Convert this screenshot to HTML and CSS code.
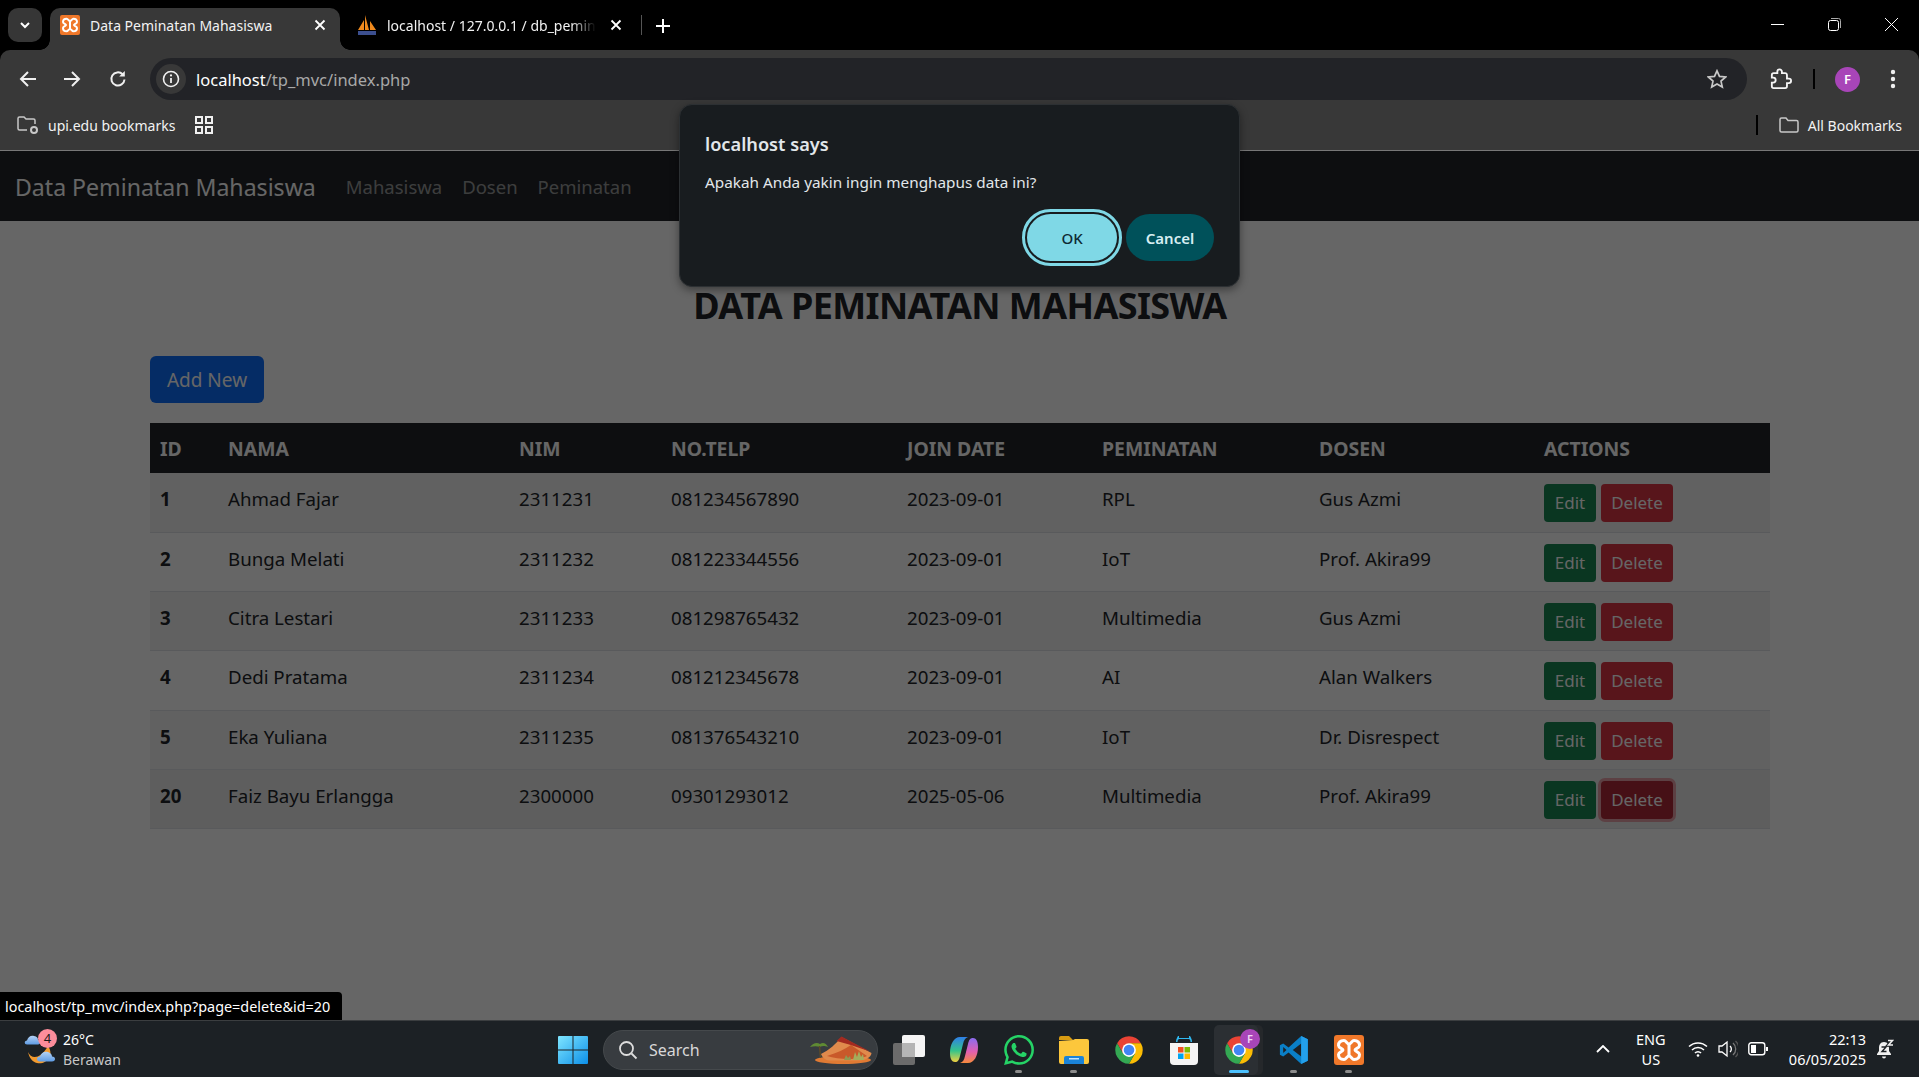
FILE: index.html
```html
<!DOCTYPE html>
<html>
<head>
    <title>Data Peminatan Mahasiswa</title>
    <link rel="stylesheet" href="styles.css">
</head>
<body>
    <svg class="defs" width="0" height="0">
        <defs>
            <linearGradient id="win-grad" x1="0" y1="0" x2="1" y2="1">
                <stop offset="0" stop-color="#7fe6ff"/>
                <stop offset="1" stop-color="#0c8fe8"/>
            </linearGradient>
            <linearGradient id="cop-a" x1="0" y1="0" x2="0" y2="1">
                <stop offset="0" stop-color="#2f7fe8"/>
                <stop offset="0.55" stop-color="#35c48a"/>
                <stop offset="1" stop-color="#f0d040"/>
            </linearGradient>
            <linearGradient id="cop-b" x1="0" y1="0" x2="0" y2="1">
                <stop offset="0" stop-color="#8a6cf0"/>
                <stop offset="0.55" stop-color="#e25fb0"/>
                <stop offset="1" stop-color="#f58a3c"/>
            </linearGradient>
            <linearGradient id="cloud-grad" x1="0" y1="0" x2="0" y2="1">
                <stop offset="0" stop-color="#b4d2f4"/>
                <stop offset="1" stop-color="#5f9ce4"/>
            </linearGradient>
            <symbol id="chrome" viewBox="0 0 48 48">
                <path fill="#ea4335" d="M4.95 13A22 22 0 0 1 43.05 13H24L14.47 29.5Z"/>
                <path fill="#fbbc04" d="M43.05 13A22 22 0 0 1 24 46L33.53 29.5L24 13Z"/>
                <path fill="#34a853" d="M24 46A22 22 0 0 1 4.95 13L14.47 29.5H33.53Z"/>
                <circle cx="24" cy="24" r="11" fill="#fff"/>
                <circle cx="24" cy="24" r="8.5" fill="#4285f4"/>
            </symbol>
            <symbol id="xampp" viewBox="0 0 30 30">
                <rect width="30" height="30" rx="3" fill="#f0782a"/>
                <path fill="none" stroke="#fff" stroke-width="3" d="M10 5.500C12 5.500 13 9 15 9C17 9 18 5.500 20 5.500C24 5.500 25.500 8 25.500 10.500C25.500 13 21 13.500 21 15C21 16.500 25.500 17 25.500 19.500C25.500 22 24 24.500 20 24.500C18 24.500 17 21 15 21C13 21 12 24.500 10 24.500C6 24.500 4.500 22 4.500 19.500C4.500 17 9 16.500 9 15C9 13.500 4.500 13 4.500 10.500C4.500 8 6 5.500 10 5.500Z"/>
                <rect x="13.5" y="9" width="3" height="12" fill="#fff"/>
            </symbol>
        </defs>
    </svg>

    <div class="tabstrip">
        <div class="tab-search">
            <svg width="12" height="12" viewBox="0 0 12 12"><path d="M2 4l4 4 4-4" fill="none" stroke="#fff" stroke-width="2"/></svg>
        </div>
        <div class="tab tab-active">
            <svg class="favicon" width="20" height="20"><use href="#xampp"/></svg>
            <span class="tab-title">Data Peminatan Mahasiswa</span>
            <svg class="tab-close" width="12" height="12" viewBox="0 0 12 12"><path d="M1.5 1.5l9 9M10.5 1.5l-9 9" stroke="#fff" stroke-width="1.8"/></svg>
        </div>
        <div class="tab tab-other">
            <svg class="favicon" width="20" height="22" viewBox="0 0 20 22">
                <path fill="#f08a1d" d="M1 16L7 6V16ZM8 16V1L12 16ZM13 16V7L19 16Z"/>
                <rect x="1" y="17" width="18" height="4" fill="#3c4f8f"/>
            </svg>
            <span class="tab-title tab-fade">localhost / 127.0.0.1 / db_peminatan</span>
            <svg class="tab-close" width="12" height="12" viewBox="0 0 12 12"><path d="M1.5 1.5l9 9M10.5 1.5l-9 9" stroke="#fff" stroke-width="1.8"/></svg>
        </div>
        <div class="tab-sep"></div>
        <svg class="tab-new" width="14" height="14" viewBox="0 0 14 14"><path d="M7 0v14M0 7h14" stroke="#fff" stroke-width="2"/></svg>
        <div class="win-controls">
            <svg width="13" height="13" viewBox="0 0 13 13"><path d="M0 6.500h13" stroke="#fff"/></svg>
            <svg width="13" height="13" viewBox="0 0 13 13"><rect x="0.5" y="2.5" width="10" height="10" rx="2" fill="none" stroke="#fff"/><path d="M3 .5h7.500a2 2 0 0 1 2 2V10" fill="none" stroke="#aaa"/></svg>
            <svg width="13" height="13" viewBox="0 0 13 13"><path d="M0 0l13 13M13 0L0 13" stroke="#fff"/></svg>
        </div>
    </div>

    <div class="toolbar">
        <svg class="nav-icon" width="18" height="18" viewBox="0 0 18 18"><path d="M17 9H2M9 2L2 9l7 7" fill="none" stroke="#f0f0f0" stroke-width="2"/></svg>
        <svg class="nav-icon" width="18" height="18" viewBox="0 0 18 18"><path d="M1 9h15M9 2l7 7-7 7" fill="none" stroke="#f0f0f0" stroke-width="2"/></svg>
        <svg class="nav-icon" width="18" height="18" viewBox="0 0 18 18"><path d="M15.5 9.500A6.600 6.600 0 1 1 13.600 4.300" fill="none" stroke="#f0f0f0" stroke-width="2"/><path d="M15.800 1v5.600h-5.600z" fill="#f0f0f0"/></svg>
        <div class="omnibox">
            <div class="site-info">
                <svg width="18" height="18" viewBox="0 0 18 18"><circle cx="9" cy="9" r="7.5" fill="none" stroke="#f0f0f0" stroke-width="1.6"/><path d="M9 8v5" stroke="#f0f0f0" stroke-width="1.8"/><circle cx="9" cy="5.4" r="1.1" fill="#f0f0f0"/></svg>
            </div>
            <span class="url"><b>localhost</b>/tp_mvc/index.php</span>
            <svg class="star" width="20" height="20" viewBox="0 0 20 20"><path d="M10 1.800l2.500 5.600 6.100.6-4.600 4.100 1.300 6L10 15l-5.300 3.100 1.300-6L1.400 8l6.100-.6z" fill="none" stroke="#c8c8c8" stroke-width="1.7"/></svg>
        </div>
        <svg class="puzzle" width="22" height="22" viewBox="0 0 24 24"><path d="M20.500 11.500H18.500V7.500c0-1.100-.9-2-2-2h-3.500V4a2.500 2.500 0 0 0-5 0v1.500H4c-1.100 0-2 .9-2 2v3h1.500a2.700 2.700 0 0 1 0 5.400H2V20c0 1.100.9 2 2 2h12.500c1.100 0 2-.9 2-2v-3.500h2a2.500 2.500 0 0 0 0-5z" fill="none" stroke="#f4f4f4" stroke-width="2"/></svg>
        <div class="toolbar-sep"></div>
        <div class="avatar">F</div>
        <svg class="menu-dots" width="6" height="20" viewBox="0 0 6 20"><circle cx="3" cy="3" r="2.2" fill="#f0f0f0"/><circle cx="3" cy="10" r="2.2" fill="#f0f0f0"/><circle cx="3" cy="17" r="2.2" fill="#f0f0f0"/></svg>
    </div>

    <div class="bookmarks">
        <svg class="bm-folder" width="22" height="20" viewBox="0 0 22 20"><path d="M10 15H2.500A1.500 1.500 0 0 1 1 13.500V3.500A1.500 1.500 0 0 1 2.500 2H7l2 2h7.500A1.500 1.500 0 0 1 18 5.500V9" fill="none" stroke="#c8c8c8" stroke-width="1.5"/><circle cx="17" cy="15" r="3" fill="none" stroke="#c8c8c8" stroke-width="2"/></svg>
        <span class="bm-text">upi.edu bookmarks</span>
        <svg class="bm-apps" width="18" height="18" viewBox="0 0 18 18"><g fill="none" stroke="#f0f0f0" stroke-width="2"><rect x="1" y="1" width="6" height="6"/><rect x="11" y="1" width="6" height="6"/><rect x="1" y="11" width="6" height="6"/><rect x="11" y="11" width="6" height="6"/></g></svg>
        <div class="bm-sep"></div>
        <svg class="bm-all" width="20" height="16" viewBox="0 0 20 16"><path d="M2.500 1H7l2 2.500h8.500A1.500 1.500 0 0 1 19 5v8.500a1.500 1.500 0 0 1-1.500 1.500h-15A1.500 1.500 0 0 1 1 13.500v-11A1.500 1.500 0 0 1 2.500 1z" fill="none" stroke="#c8c8c8" stroke-width="1.5"/></svg>
        <span class="bm-text">All Bookmarks</span>
    </div>

    <div class="viewport">
        <nav class="navbar">
            <span class="brand">Data Peminatan Mahasiswa</span>
            <a class="nav-link">Mahasiswa</a>
            <a class="nav-link">Dosen</a>
            <a class="nav-link">Peminatan</a>
        </nav>
        <main class="content">
            <h1>DATA PEMINATAN MAHASISWA</h1>
            <a class="btn btn-primary">Add New</a>
            <table class="data-table">
                <colgroup>
                    <col class="c-id"><col class="c-nama"><col class="c-nim"><col class="c-telp">
                    <col class="c-join"><col class="c-minat"><col class="c-dosen"><col class="c-act">
                </colgroup>
                <thead>
                    <tr><th>ID</th><th>NAMA</th><th>NIM</th><th>NO.TELP</th><th>JOIN DATE</th><th>PEMINATAN</th><th>DOSEN</th><th>ACTIONS</th></tr>
                </thead>
                <tbody>
                    <tr><td class="id">1</td><td>Ahmad Fajar</td><td>2311231</td><td>081234567890</td><td>2023-09-01</td><td>RPL</td><td>Gus Azmi</td><td class="actions"><div class="action-row"><a class="btn-sm btn-edit">Edit</a><a class="btn-sm btn-delete">Delete</a></div></td></tr>
                    <tr><td class="id">2</td><td>Bunga Melati</td><td>2311232</td><td>081223344556</td><td>2023-09-01</td><td>IoT</td><td>Prof. Akira99</td><td class="actions"><div class="action-row"><a class="btn-sm btn-edit">Edit</a><a class="btn-sm btn-delete">Delete</a></div></td></tr>
                    <tr><td class="id">3</td><td>Citra Lestari</td><td>2311233</td><td>081298765432</td><td>2023-09-01</td><td>Multimedia</td><td>Gus Azmi</td><td class="actions"><div class="action-row"><a class="btn-sm btn-edit">Edit</a><a class="btn-sm btn-delete">Delete</a></div></td></tr>
                    <tr><td class="id">4</td><td>Dedi Pratama</td><td>2311234</td><td>081212345678</td><td>2023-09-01</td><td>AI</td><td>Alan Walkers</td><td class="actions"><div class="action-row"><a class="btn-sm btn-edit">Edit</a><a class="btn-sm btn-delete">Delete</a></div></td></tr>
                    <tr><td class="id">5</td><td>Eka Yuliana</td><td>2311235</td><td>081376543210</td><td>2023-09-01</td><td>IoT</td><td>Dr. Disrespect</td><td class="actions"><div class="action-row"><a class="btn-sm btn-edit">Edit</a><a class="btn-sm btn-delete">Delete</a></div></td></tr>
                    <tr class="hovered"><td class="id">20</td><td>Faiz Bayu Erlangga</td><td>2300000</td><td>09301293012</td><td>2025-05-06</td><td>Multimedia</td><td>Prof. Akira99</td><td class="actions"><div class="action-row"><a class="btn-sm btn-edit">Edit</a><a class="btn-sm btn-delete is-hover">Delete</a></div></td></tr>
                </tbody>
            </table>
        </main>
        <div class="dim"></div>
        <div class="status-bubble">localhost/tp_mvc/index.php?page=delete&amp;id=20</div>
    </div>

    <div class="dialog">
        <div class="dialog-title">localhost says</div>
        <div class="dialog-msg">Apakah Anda yakin ingin menghapus data ini?</div>
        <div class="dialog-actions">
            <button class="dlg-btn dlg-ok">OK</button>
            <button class="dlg-btn dlg-cancel">Cancel</button>
        </div>
    </div>

    <footer class="taskbar">
        <div class="weather">
            <svg class="weather-icon" width="34" height="36" viewBox="0 0 34 36">
                <path fill="#f29a2e" d="M4 20C7 27 16 28 24 14C31 24 22 33 13 31C8 30 5 25 4 20Z"/>
                <path fill="url(#cloud-grad)" d="M3 12.500C0 12.500 0 8.500 3 8.500C4 5 7 3 10 4C13 4.500 14 6 14 8C17 8 17 12.500 14 12.500Z"/>
                <path fill="url(#cloud-grad)" d="M16 29.500C12 29.500 12 24.500 16 24.500C17 20 21 19 24 20C27 21 28 23 28 24.500C32 24.500 32 29.500 28 29.500Z"/>
            </svg>
            <span class="weather-badge">4</span>
            <div class="weather-text">
                <div class="w-temp">26°C</div>
                <div class="w-desc">Berawan</div>
            </div>
        </div>
        <div class="task-start">
            <svg width="30" height="30" viewBox="0 0 30 30"><path fill="url(#win-grad)" d="M1 1h13.500v13.500H0V2a1 1 0 0 1 1-1zM15.500 1H29a1 1 0 0 1 1 1v12.500H15.500zM0 15.500h14.500V29H1a1 1 0 0 1-1-1zM15.500 15.500H30V28a1 1 0 0 1-1 1H15.500z"/></svg>
        </div>
        <div class="task-search">
            <svg width="20" height="20" viewBox="0 0 20 20"><circle cx="8.5" cy="8.5" r="6.5" fill="none" stroke="#ddd" stroke-width="1.8"/><path d="M13.500 13.500L18.500 18.500" stroke="#ddd" stroke-width="1.8"/></svg>
            <span>Search</span>
            <svg class="search-art" width="63" height="28" viewBox="0 0 63 28">
                <ellipse cx="34" cy="24" rx="28" ry="4" fill="#e07a33"/>
                <path d="M12 18C20 14 27 8 32.500 1L62.500 17C62 21 58 24 50 24.500H20C16 24 13 21 12 18Z" fill="#e08a4c"/>
                <path d="M18 20C28 17 36 13 42 9L58 20C50 24 30 24 18 20Z" fill="#c9592a"/>
                <path d="M27.500 5L32.500 .5L61 15.500L41 8.700Z" fill="#a32a20"/>
                <path d="M1 11C4 7 8 6 11 8C14 6 17 7 19 11C15 9.500 13 10 11 11C8 10 5 10 1 11Z" fill="#5f8a33"/>
                <path d="M10.500 10L11.500 22" stroke="#5b4a28" stroke-width="1.5"/>
                <path d="M44 24L46 16L48 21L50 15L52 21L54 18L55 24Z" fill="#a4ad5c"/>
                <path d="M35 24L37 19L39 22L41 20L42 24Z" fill="#8f9a52"/>
            </svg>
        </div>
        <div class="task-icon">
            <svg width="32" height="30" viewBox="0 0 32 30"><rect x="0" y="8" width="22" height="22" rx="2" fill="#6b6b6b"/><rect x="9" y="0" width="23" height="22" rx="2" fill="#f5f5f5"/><rect x="9" y="8" width="13" height="14" fill="#b5b5b5"/></svg>
        </div>
        <div class="task-icon">
            <svg width="28" height="28" viewBox="0 0 28 28">
                <path fill="url(#cop-a)" d="M10 1H18C15 2 14 4 13 8L10 20C9 24 8 26 5 26C2 26 0 23 0 17C0 8 4 1 10 1Z"/>
                <path fill="url(#cop-b)" d="M18 27H10C13 26 14 24 15 20L18 8C19 4 20 2 23 2C26 2 28 5 28 11C28 20 24 27 18 27Z"/>
            </svg>
        </div>
        <div class="task-icon has-dot">
            <svg width="30" height="30" viewBox="0 0 24 24"><path fill="#25d366" d="M17.472 14.382c-.297-.149-1.758-.867-2.03-.967-.273-.099-.471-.148-.67.15-.197.297-.767.966-.94 1.164-.173.199-.347.223-.644.075-.297-.15-1.255-.463-2.39-1.475-.883-.788-1.48-1.761-1.653-2.059-.173-.297-.018-.458.13-.606.134-.133.298-.347.446-.52.149-.174.198-.298.298-.497.099-.198.05-.371-.025-.52-.075-.149-.669-1.612-.916-2.207-.242-.579-.487-.5-.669-.51-.173-.008-.371-.01-.57-.01-.198 0-.52.074-.792.372-.272.297-1.04 1.016-1.04 2.479 0 1.462 1.065 2.875 1.213 3.074.149.198 2.096 3.2 5.077 4.487.709.306 1.262.489 1.694.625.712.227 1.36.195 1.871.118.571-.085 1.758-.719 2.006-1.413.248-.694.248-1.289.173-1.413-.074-.124-.272-.198-.57-.347m-5.421 7.403h-.004a9.87 9.87 0 01-5.031-1.378l-.361-.214-3.741.982.998-3.648-.235-.374a9.86 9.86 0 01-1.51-5.26c.001-5.45 4.436-9.884 9.888-9.884 2.64 0 5.122 1.03 6.988 2.898a9.825 9.825 0 012.893 6.994c-.003 5.45-4.437 9.884-9.885 9.884m8.413-18.297A11.815 11.815 0 0012.05 0C5.495 0 .16 5.335.157 11.892c0 2.096.547 4.142 1.588 5.945L.057 24l6.305-1.654a11.882 11.882 0 005.683 1.448h.005c6.554 0 11.89-5.335 11.893-11.893a11.821 11.821 0 00-3.48-8.413z"/></svg>
        </div>
        <div class="task-icon has-dot">
            <svg width="30" height="28" viewBox="0 0 30 28"><path fill="#d79b12" d="M0 2a2 2 0 0 1 2-2h8l4 4H0z"/><path fill="#fcc73c" d="M0 5l14-1 2-1h12a2 2 0 0 1 2 2v21a2 2 0 0 1-2 2H2a2 2 0 0 1-2-2z"/><path fill="#1a83d8" d="M5 28v-6a2 2 0 0 1 2-2h16a2 2 0 0 1 2 2v6z"/><rect x="10" y="22" width="10" height="1.5" fill="#bfe3ff"/></svg>
        </div>
        <div class="task-icon">
            <svg width="30" height="30"><use href="#chrome"/></svg>
        </div>
        <div class="task-icon">
            <svg width="30" height="30" viewBox="0 0 30 30"><path fill="#2fb8f0" d="M7 7C7 4 8 3 9 1H10V3H20V1H21C22 3 23 4 23 7H21.500C21.500 5 21 4.500 20 4H10C9 4.500 8.500 5 8.500 7Z"/><path fill="#f4f4f4" d="M1 8h28v18a4 4 0 0 1-4 4H5a4 4 0 0 1-4-4z"/><rect x="9" y="12" width="5.500" height="5.500" fill="#f25022"/><rect x="15.5" y="12" width="5.500" height="5.500" fill="#7fba00"/><rect x="9" y="18.5" width="5.500" height="5.500" fill="#00a4ef"/><rect x="15.5" y="18.5" width="5.500" height="5.500" fill="#ffb900"/></svg>
        </div>
        <div class="task-icon is-active">
            <span class="active-tile"></span>
            <svg class="stacked" width="30" height="30"><use href="#chrome"/></svg>
            <span class="chrome-badge">F</span>
        </div>
        <div class="task-icon has-dot">
            <svg width="30" height="30" viewBox="0 0 100 100"><path fill="#0a7fc7" fill-rule="evenodd" d="M74 3L96 14V86L74 97L32 58L14 72L3 66V34L14 28L32 42ZM74 28L46 50L74 72ZM14 40V60L25 50Z"/><path fill="#23a0ec" d="M74 3L96 14V86L74 97Z"/></svg>
        </div>
        <div class="task-icon has-dot">
            <svg width="30" height="30"><use href="#xampp"/></svg>
        </div>
        <div class="tray">
            <svg class="tray-chev" width="14" height="8" viewBox="0 0 14 8"><path d="M1 7l6-6 6 6" fill="none" stroke="#fff" stroke-width="1.8"/></svg>
            <div class="tray-lang">ENG<br>US</div>
            <svg class="tray-wifi" width="20" height="16" viewBox="0 0 20 16"><g fill="none" stroke="#fff" stroke-width="1.5"><path d="M1 5.500a13 13 0 0 1 18 0"/><path d="M4 9a8.500 8.500 0 0 1 12 0"/><path d="M7 12a4 4 0 0 1 6 0"/></g><circle cx="10" cy="14.5" r="1.3" fill="#fff"/></svg>
            <svg class="tray-vol" width="20" height="18" viewBox="0 0 20 18"><path d="M1 6h3l5-4v14l-5-4H1z" fill="none" stroke="#fff" stroke-width="1.3"/><path d="M12 6a4 4 0 0 1 0 6" fill="none" stroke="#fff" stroke-width="1.3"/><path d="M15 3a8 8 0 0 1 0 12" fill="none" stroke="#777" stroke-width="1.3"/><path d="M17.500 1a11 11 0 0 1 0 16" fill="none" stroke="#555" stroke-width="1.3"/></svg>
            <svg class="tray-batt" width="20" height="14" viewBox="0 0 20 14"><rect x="0.8" y="0.8" width="16" height="12" rx="2.5" fill="none" stroke="#fff" stroke-width="1.4"/><rect x="3" y="3" width="5" height="8" fill="#fff"/><rect x="18" y="5" width="2" height="4" fill="#fff"/></svg>
            <div class="tray-clock">22:13<br>06/05/2025</div>
            <svg class="tray-bell" width="18" height="21" viewBox="0 0 18 21"><path d="M8 3C4.500 3 3 6 3 9V12L1 15V16H15V15L13 12V9C13 6 11.500 3 8 3Z" fill="#f0f0f0"/><path d="M6 17.500H10A2 2 0 0 1 6 17.500Z" fill="#f0f0f0"/><path d="M5.500 8H10L6 12.500H10.500" fill="none" stroke="#1c2125" stroke-width="1.4"/><path d="M11.500 1.500H16.500L12.500 6H17" fill="none" stroke="#1c2125" stroke-width="3.5"/><path d="M12 1.500H16.500L12.500 6H17" fill="none" stroke="#f0f0f0" stroke-width="1.5"/></svg>
        </div>
    </footer>
</body>
</html>
```

FILE: styles.css
```css
* {
    box-sizing: border-box;
}

html, body {
    margin: 0;
    height: 1077px;
    overflow: hidden;
}

body {
    display: flex;
    flex-direction: column;
    position: relative;
    background: #000;
    font-family: "Noto Sans", "Open Sans", sans-serif;
    color: #fff;
}

.defs {
    position: absolute;
}

/* browser: tab strip */
.tabstrip {
    display: flex;
    align-items: flex-start;
    height: 50px;
    padding: 8px 0 0 8px;
    background: #000;
    flex: none;
}

.tab-search {
    display: flex;
    align-items: center;
    justify-content: center;
    width: 34px;
    height: 34px;
    border-radius: 10px;
    background: #363636;
}

.tab {
    display: flex;
    align-items: center;
    height: 42px;
    padding-bottom: 8px;
    font-size: 15px;
}

.tab-active {
    position: relative;
    width: 290px;
    margin-left: 8px;
    padding-left: 10px;
    background: #383838;
    border-radius: 10px 10px 0 0;
}

.tab-active::before,
.tab-active::after {
    content: "";
    position: absolute;
    bottom: 0;
    width: 10px;
    height: 10px;
    background: radial-gradient(circle at 0 0, #000 9.5px, #383838 10px);
}

.tab-active::before {
    left: -10px;
}

.tab-active::after {
    right: -10px;
    background: radial-gradient(circle at 100% 0, #000 9.5px, #383838 10px);
}

.tab-other {
    width: 288px;
    margin-left: 5px;
    padding-left: 12px;
}

.favicon {
    flex: none;
    margin-right: 10px;
}

.tab-title {
    display: block;
    width: 209px;
    white-space: nowrap;
    overflow: hidden;
    font-size: 14px;
    color: #f2f2f2;
}

.tab-active .tab-title {
    width: 224px;
}

.tab-fade {
    -webkit-mask-image: linear-gradient(to right, #000 88%, transparent);
    mask-image: linear-gradient(to right, #000 88%, transparent);
}

.tab-close {
    flex: none;
}

.tab-other .tab-close {
    margin-left: 14px;
}

.tab-sep {
    width: 1px;
    height: 20px;
    margin: 7px 0 0 8px;
    background: #555;
}

.tab-new {
    margin: 11px 0 0 14px;
}

.win-controls {
    display: flex;
    gap: 44px;
    margin: 10px 21px 0 auto;
}

/* browser: toolbar */
.toolbar {
    display: flex;
    align-items: center;
    flex: none;
    height: 58px;
    padding-left: 19px;
    background: #383838;
    border-radius: 10px 10px 0 0;
}

.nav-icon {
    margin-right: 26px;
}

.nav-icon:nth-child(2) {
    margin-right: 28px;
}

.nav-icon:nth-child(3) {
    margin-right: 23px;
}

.omnibox {
    display: flex;
    align-items: center;
    width: 1597px;
    height: 42px;
    padding: 0 20px 0 6px;
    border-radius: 21px;
    background: #222327;
}

.site-info {
    display: flex;
    align-items: center;
    justify-content: center;
    width: 30px;
    height: 30px;
    border-radius: 50%;
    background: #383838;
}

.url {
    margin-left: 10px;
    font-size: 16.5px;
    color: #a8a8a8;
}

.url b {
    font-weight: 400;
    color: #fff;
}

.star {
    margin-left: auto;
}

.puzzle {
    margin-left: 23px;
}

.toolbar-sep {
    width: 2px;
    height: 20px;
    margin-left: 21px;
    background: #000;
}

.avatar {
    display: flex;
    align-items: center;
    justify-content: center;
    width: 25px;
    height: 25px;
    margin-left: 20px;
    border-radius: 50%;
    background: #a845b8;
    font-size: 13px;
    font-weight: 600;
}

.menu-dots {
    margin-left: 30px;
}

/* browser: bookmarks */
.bookmarks {
    display: flex;
    align-items: center;
    flex: none;
    height: 43px;
    padding: 0 17px 8px 17px;
    background: #383838;
    border-bottom: 1px solid #777;
}

.bm-text {
    font-size: 14px;
    color: #f2f2f2;
    margin-left: 9px;
}

.bm-apps {
    margin-left: 20px;
}

.bm-sep {
    width: 2px;
    height: 20px;
    margin-left: auto;
    background: #000;
}

.bm-all {
    margin-left: 21px;
}

/* page */
.viewport {
    position: relative;
    flex: 1;
    background: #fff;
    color: #212529;
}

.navbar {
    display: flex;
    align-items: center;
    height: 70px;
    padding: 2px 0 0 15px;
    background: #212529;
}

.brand {
    margin-right: 30px;
    font-size: 23.1px;
    color: #fff;
}

.nav-link {
    margin: 0 20px 2px 0;
    font-size: 18.5px;
    color: rgba(255, 255, 255, .55);
}

.content {
    display: flex;
    flex-direction: column;
    align-items: flex-start;
    padding: 61px 149px 0 150px;
}

h1 {
    align-self: center;
    margin: 0 0 26px;
    font-size: 36px;
    font-weight: 700;
    line-height: 48px;
    letter-spacing: -.6px;
}

.btn {
    display: flex;
    align-items: center;
    justify-content: center;
    width: 114px;
    height: 47px;
    margin-bottom: 20px;
    border-radius: 6px;
    font-size: 19px;
}

.btn-primary {
    background: #0d6efd;
    color: #fff;
}

.data-table {
    width: 1620px;
    border-collapse: collapse;
    table-layout: fixed;
    font-size: 18.7px;
}

.c-id { width: 70px; }
.c-nama { width: 291px; }
.c-nim { width: 152px; }
.c-telp { width: 236px; }
.c-join { width: 195px; }
.c-minat { width: 217px; }
.c-dosen { width: 225px; }
.c-act { width: 234px; }

.data-table th {
    height: 50px;
    padding: 1px 8px 0;
    background: #212529;
    color: #fff;
    font-size: 19.4px;
    text-align: left;
    font-weight: 700;
}

.data-table th:first-child,
.data-table td.id {
    padding-left: 10px;
}

.data-table td {
    height: 59.3px;
    padding: 11px 8px 0;
    vertical-align: top;
    line-height: 30px;
    border-bottom: 1px solid #dee2e6;
}

.data-table tbody tr:nth-child(odd) td {
    background: rgba(0, 0, 0, .05);
}

.data-table tbody tr.hovered td {
    background: rgba(0, 0, 0, .075);
}

.data-table td.id {
    font-weight: 700;
}

.action-row {
    display: flex;
    gap: 5px;
}

.btn-sm {
    display: flex;
    align-items: center;
    justify-content: center;
    height: 38px;
    border-radius: 4px;
    font-size: 17px;
    color: #fff;
}

.btn-edit {
    width: 52px;
    background: #198754;
}

.btn-delete {
    width: 72px;
    background: #dc3545;
}

.btn-delete.is-hover {
    background: #b02a37;
    box-shadow: 0 0 0 3px rgba(225, 83, 97, .5);
}

/* dimmed backdrop of the native confirm */
.dim {
    position: absolute;
    inset: 0;
    background: rgba(0, 0, 0, .6);
}

.status-bubble {
    position: absolute;
    left: 0;
    bottom: 0;
    width: 342px;
    height: 28px;
    padding-left: 5px;
    background: #000;
    border-radius: 0 4px 0 0;
    color: #fff;
    font-size: 14.4px;
    line-height: 29px;
    white-space: nowrap;
}

/* native confirm dialog */
.dialog {
    position: absolute;
    top: 104px;
    left: 679px;
    width: 561px;
    height: 183px;
    padding: 26px 25px 0;
    border-radius: 13px;
    background: #181c1f;
    border: 1px solid #2c3033;
    box-shadow: 0 3px 8px rgba(0, 0, 0, .4);
    color: #e2e7ea;
}

.dialog-title {
    font-size: 18.2px;
    font-weight: 600;
    line-height: 26px;
}

.dialog-msg {
    margin-top: 13px;
    font-size: 15.3px;
    line-height: 24px;
}

.dialog-actions {
    display: flex;
    justify-content: flex-end;
    gap: 9px;
    margin-top: 20px;
}

.dlg-btn {
    height: 47px;
    border: none;
    border-radius: 24px;
    font-family: inherit;
    font-size: 15px;
    font-weight: 500;
}

.dlg-ok {
    width: 90px;
    background: #7fd8e6;
    color: #0e2a33;
    outline: 3px solid #7fd8e6;
    outline-offset: 2px;
}

.dlg-cancel {
    width: 88px;
    background: #00515a;
    color: #d6eef2;
    font-weight: 600;
}

/* windows taskbar */
.taskbar {
    display: flex;
    align-items: center;
    flex: none;
    height: 57px;
    padding-top: 2px;
    background: #1c2125;
    border-top: 1px solid #3b3e40;
}

.weather {
    position: relative;
    display: flex;
    align-items: center;
    width: 545px;
    padding-left: 24px;
}

.weather-icon {
    flex: none;
}

.weather-badge {
    position: absolute;
    left: 38px;
    top: -1px;
    width: 19px;
    height: 19px;
    border-radius: 50%;
    background: #fc8d9b;
    color: #1a1a1a;
    font-size: 13px;
    line-height: 19px;
    text-align: center;
}

.weather-text {
    margin-left: 5px;
    font-size: 14px;
    line-height: 20px;
}

.w-desc {
    color: #c6c6c6;
}

.task-start {
    display: flex;
    align-items: center;
    justify-content: center;
    width: 55px;
}

.task-search {
    display: flex;
    align-items: center;
    position: relative;
    width: 275px;
    height: 40px;
    margin: 0 3px;
    padding-left: 14px;
    border-radius: 20px;
    background: #383c40;
    border: 1px solid #45494c;
    color: #d8d8d8;
    font-size: 16px;
}

.task-search span {
    margin-left: 11px;
}

.search-art {
    margin-left: auto;
    margin-right: 5px;
}

.task-icon {
    position: relative;
    display: flex;
    align-items: center;
    justify-content: center;
    width: 55px;
    height: 50px;
}

.task-icon.has-dot::after {
    content: "";
    position: absolute;
    left: 24px;
    bottom: 2px;
    width: 7px;
    height: 3px;
    border-radius: 2px;
    background: #8c8c8c;
}

.active-tile {
    position: absolute;
    left: 3px;
    top: 0;
    width: 44px;
    height: 50px;
    border-radius: 5px;
    background: #2b2f33;
    box-shadow: 5px 0 0 #25282b;
}

.stacked {
    position: relative;
}

.is-active::after {
    content: "";
    position: absolute;
    left: 18px;
    bottom: 2px;
    width: 20px;
    height: 3px;
    border-radius: 2px;
    background: #4cc2ff;
}

.chrome-badge {
    position: absolute;
    left: 29px;
    top: 4px;
    width: 20px;
    height: 20px;
    border-radius: 50%;
    background: #a845b8;
    color: #f0d8f4;
    font-size: 11px;
    font-weight: 600;
    line-height: 20px;
    text-align: center;
}

.tray {
    display: flex;
    align-items: center;
    margin-left: auto;
    padding: 0 25px 2px 0;
    font-size: 14.5px;
    line-height: 20px;
}

.tray-lang {
    width: 40px;
    margin-left: 21px;
    text-align: center;
}

.tray-wifi {
    margin-left: 17px;
}

.tray-vol {
    margin-left: 10px;
}

.tray-batt {
    margin-left: 10px;
}

.tray-clock {
    margin-left: 21px;
    text-align: right;
}

.tray-bell {
    margin-left: 10px;
}
```
